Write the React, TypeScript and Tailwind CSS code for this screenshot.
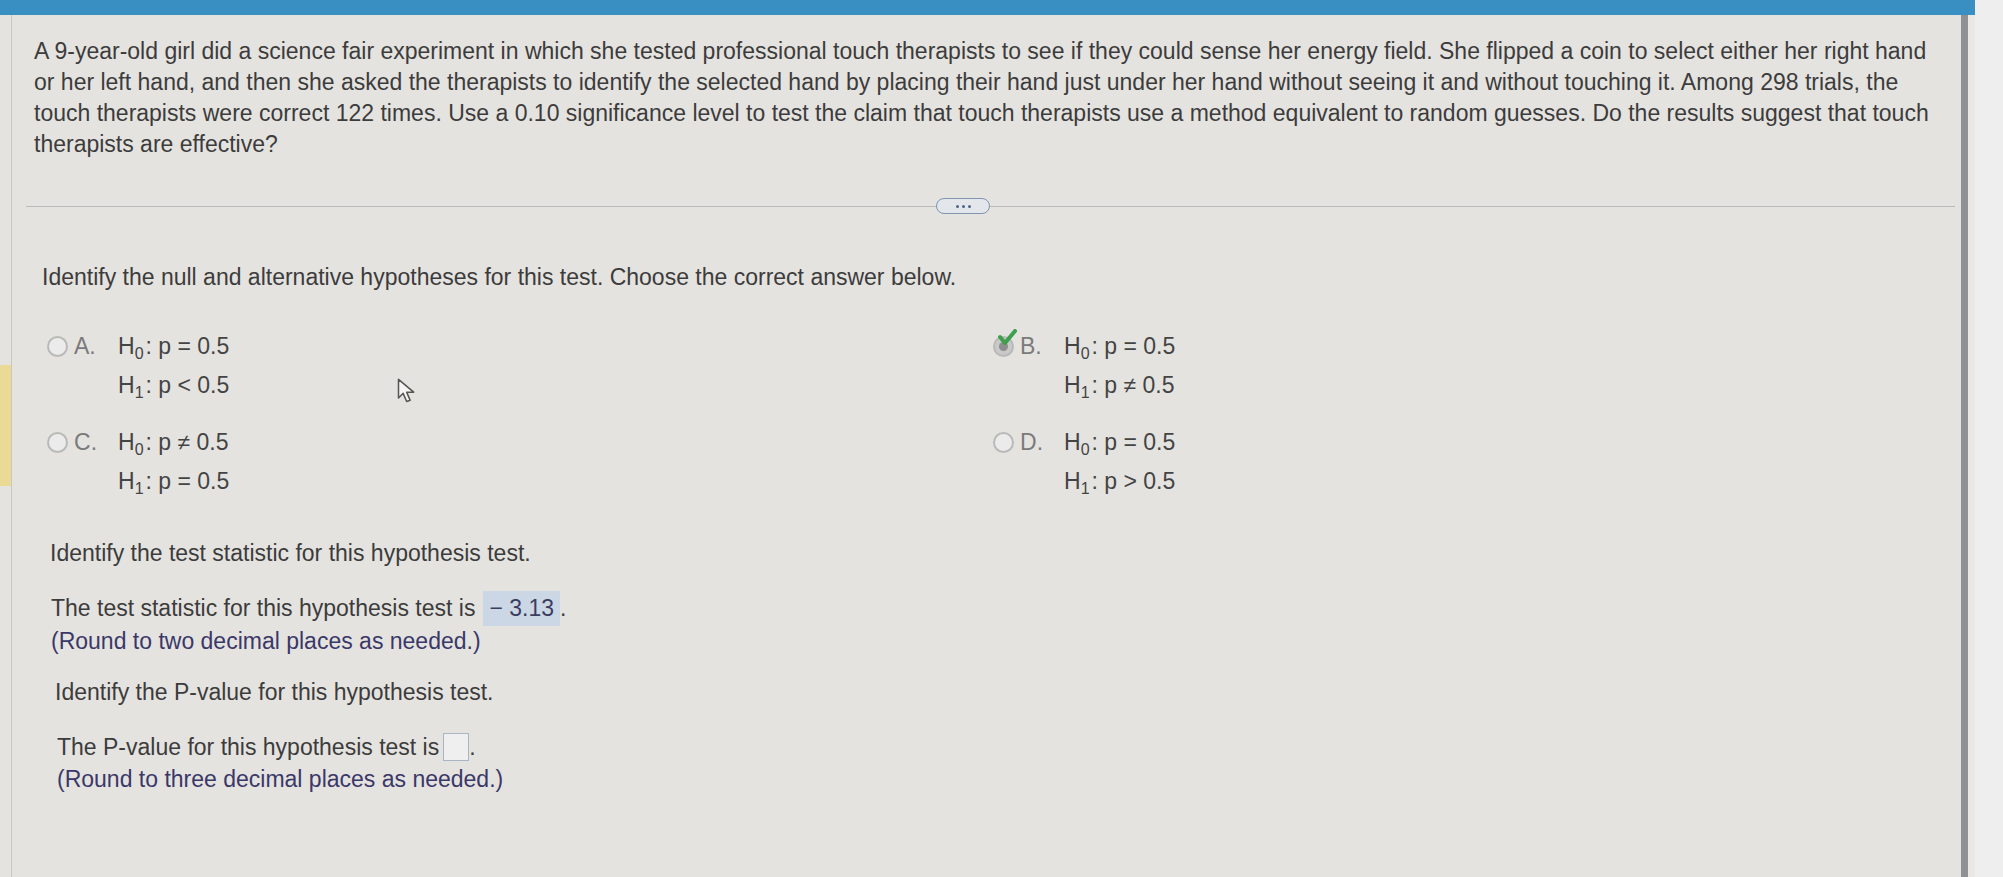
import React from "react";

const H = ({ n, rel }: { n: string; rel: string }) => (
  <div className="flex items-baseline h-[39px] leading-[39px]">
    <span>H</span>
    <sub className="text-[16px] relative top-[5px]">{n}</sub>
    <span className="ml-[2px]">: {rel}</span>
  </div>
);

const Radio = ({ checked }: { checked?: boolean }) => (
  <div className="relative w-[21px] h-[21px] mt-[9px] shrink-0">
    <div className={`w-[21px] h-[21px] rounded-full border-2 border-[#b9b9b9] ${checked ? "bg-[#c9c9c9]" : "bg-[#ebebeb]"} flex items-center justify-center`}>
      {checked && <div className="w-[9px] h-[9px] rounded-full bg-[#8d8d8d]" />}
    </div>
    {checked && (
      <svg className="absolute -top-[7px] left-[5px]" width="20" height="18" viewBox="0 0 20 18">
        <path d="M2 8 L7 14 L17 2" fill="none" stroke="#3ea04c" strokeWidth="4" strokeLinecap="round" strokeLinejoin="round" />
      </svg>
    )}
  </div>
);

const Option = ({ letter, h0, h1, checked }: { letter: string; h0: string; h1: string; checked?: boolean }) => (
  <div className="flex">
    <Radio checked={checked} />
    <span className="w-[50px] pl-[6px] leading-[39px] text-[#7a7a7a]">{letter}.</span>
    <div className="text-[#444]">
      <H n="0" rel={h0} />
      <H n="1" rel={h1} />
    </div>
  </div>
);

export default function App() {
  return (
    <div className="w-[2003px] h-[877px] flex bg-[#e5e3e0] overflow-hidden text-[23px] text-[#3c3c3c] font-['Liberation_Sans',Arial,sans-serif]">
      <div className="w-[1975px] flex flex-col">
        <div className="h-[15px] bg-[#3a8fc2] shrink-0" />
        <div className="flex flex-1">
          <div className="w-[12px] shrink-0 border-r border-[#c9c7c4] flex flex-col">
            <div className="h-[350px]" />
            <div className="h-[121px] bg-[#ebd996]" />
          </div>
          <div className="flex-1 min-w-0 flex flex-col">
            <p className="mt-[21px] pl-[22px] leading-[31px] whitespace-nowrap">
              A 9-year-old girl did a science fair experiment in which she tested professional touch therapists to see if they could sense her energy field. She flipped a coin to select either her right hand
              <br />
              or her left hand, and then she asked the therapists to identify the selected hand by placing their hand just under her hand without seeing it and without touching it. Among 298 trials, the
              <br />
              touch therapists were correct 122 times. Use a 0.10 significance level to test the claim that touch therapists use a method equivalent to random guesses. Do the results suggest that touch
              <br />
              therapists are effective?
            </p>

            <div className="relative mt-[46px] ml-[14px] w-[1929px] h-px bg-[#b9b9b9]">
              <div className="absolute left-[910px] -top-[8px] w-[54px] h-[16px] rounded-full border border-[#7f95b0] bg-[#e3e6ea] flex items-center justify-center gap-[3px]">
                <span className="w-[3px] h-[3px] rounded-full bg-[#4f6583]" />
                <span className="w-[3px] h-[3px] rounded-full bg-[#4f6583]" />
                <span className="w-[3px] h-[3px] rounded-full bg-[#4f6583]" />
              </div>
            </div>

            <p className="mt-[55px] pl-[30px] leading-[30px]">Identify the null and alternative hypotheses for this test. Choose the correct answer below.</p>

            <div className="relative mt-[35px] pl-[35px] grid grid-cols-[946px_1fr] gap-y-[18px]">
              <Option letter="A" h0="p = 0.5" h1="p < 0.5" />
              <Option letter="B" h0="p = 0.5" h1="p ≠ 0.5" checked />
              <Option letter="C" h0="p ≠ 0.5" h1="p = 0.5" />
              <Option letter="D" h0="p = 0.5" h1="p > 0.5" />
              <svg className="absolute left-[384px] top-[50px]" width="26" height="28" viewBox="0 0 22 24">
                <path d="M2 2 L2 18 L6 14 L9 21 L12 20 L9 13 L15 13 Z" fill="#f4f4f4" stroke="#555" strokeWidth="1.3" strokeLinejoin="round" />
              </svg>
            </div>

            <p className="mt-[37px] pl-[38px] leading-[30px]">Identify the test statistic for this hypothesis test.</p>

            <div className="mt-[23px] pl-[39px] flex items-center h-[35px]">
              <span>The test statistic for this hypothesis test is</span>
              <span className="ml-[8px] h-[35px] px-[6px] flex items-center bg-[#ccd7e6] text-[#3b3d5e]">− 3.13</span>
              <span>.</span>
            </div>
            <p className="pl-[39px] leading-[30px] text-[#3a3868]">(Round to two decimal places as needed.)</p>

            <p className="mt-[21px] pl-[43px] leading-[30px]">Identify the P-value for this hypothesis test.</p>

            <div className="mt-[25px] pl-[45px] flex items-center h-[30px]">
              <span>The P-value for this hypothesis test is</span>
              <span className="ml-[4px] w-[26px] h-[28px] border border-[#a9b5c6] bg-[#efefef]" />
              <span>.</span>
            </div>
            <p className="mt-[2px] pl-[45px] leading-[30px] text-[#3a3868]">(Round to three decimal places as needed.)</p>
          </div>
          <div className="w-[7px] bg-[#8f9194] shrink-0" />
          <div className="w-[7px] bg-[#e9e8e6] shrink-0" />
        </div>
      </div>
      <div className="flex-1 bg-[#eeeeee]" />
    </div>
  );
}
